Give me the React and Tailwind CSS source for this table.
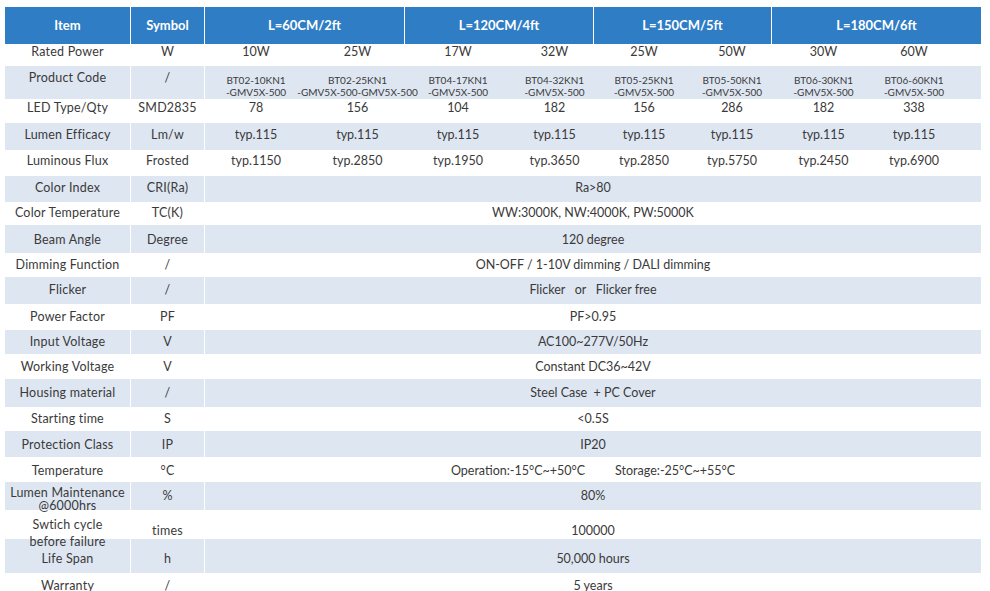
import React from "react";

const font = { fontFamily: "Lato, 'Open Sans', 'Liberation Sans', sans-serif" };

// sub column widths for the 8 value rows (204 -> 957)
const subW = ["w-[102px]", "w-[101px]", "w-[100px]", "w-[93px]", "w-[86px]", "w-[90px]", "w-[93px]", "w-[88px]"];

const codes = [
  ["BT02-10KN1", "-GMV5X-500"],
  ["BT02-25KN1", "-GMV5X-500-GMV5X-500"],
  ["BT04-17KN1", "-GMV5X-500"],
  ["BT04-32KN1", "-GMV5X-500"],
  ["BT05-25KN1", "-GMV5X-500"],
  ["BT05-50KN1", "-GMV5X-500"],
  ["BT06-30KN1", "-GMV5X-500"],
  ["BT06-60KN1", "-GMV5X-500"],
];

const rows = [
  { label: "Rated Power", sym: "W", vals: ["10W", "25W", "17W", "32W", "25W", "50W", "30W", "60W"], h: "h-[22px]", pad: "pb-[6px]" },
  { label: "Product Code", sym: "/", codes: true, h: "h-[33px]" },
  { label: "LED Type/Qty", sym: "SMD2835", vals: ["78", "156", "104", "182", "156", "286", "182", "338"], h: "h-[24px]", pad: "pb-[6px]" },
  { label: "Lumen Efficacy", sym: "Lm/w", vals: Array(8).fill("typ.115"), h: "h-[27px]", pad: "pb-[3px]" },
  { label: "Luminous Flux", sym: "Frosted", vals: ["typ.1150", "typ.2850", "typ.1950", "typ.3650", "typ.2850", "typ.5750", "typ.2450", "typ.6900"], h: "h-[26px]", pad: "pb-[4px]" },
  { label: "Color Index", sym: "CRI(Ra)", span: "Ra>80", h: "h-[26px]", pad: "pb-[2px]" },
  { label: "Color Temperature", sym: "TC(K)", span: "WW:3000K, NW:4000K, PW:5000K", h: "h-[23px]" },
  { label: "Beam Angle", sym: "Degree", span: "120 degree", h: "h-[28px]", pad: "pt-[2px]" },
  { label: "Dimming Function", sym: "/", span: "ON-OFF / 1-10V dimming / DALI dimming", h: "h-[24px]" },
  { label: "Flicker", sym: "/", span: "Flicker   or   Flicker free", h: "h-[27px]" },
  { label: "Power Factor", sym: "PF", span: "PF>0.95", h: "h-[26px]" },
  { label: "Input Voltage", sym: "V", span: "AC100~277V/50Hz", h: "h-[24px]" },
  { label: "Working Voltage", sym: "V", span: "Constant DC36~42V", h: "h-[25px]", pad: "pt-[2px]" },
  { label: "Housing material", sym: "/", span: "Steel Case  + PC Cover", h: "h-[28px]" },
  { label: "Starting time", sym: "S", span: "<0.5S", h: "h-[24px]" },
  { label: "Protection Class", sym: "IP", span: "IP20", h: "h-[26px]", pad: "pt-[2px]" },
  { label: "Temperature", sym: "°C", temp: true, h: "h-[25px]", pad: "pt-[4px]" },
  { label: ["Lumen Maintenance", "@6000hrs"], sym: "%", span: "80%", h: "h-[28px]", lead: "leading-[13px] pt-[4px]" },
  { label: ["Swtich cycle", "before failure"], sym: "times", span: "100000", h: "h-[29px]", pad: "pt-[13px]", lead: "leading-[17px] pt-[6px]" },
  { label: "Life Span", sym: "h", span: "50,000 hours", h: "h-[34px]", pad: "pt-[6px]" },
  { label: "Warranty", sym: "/", span: "5 years", h: "h-[26px]" },
];

const Header = () => (
  <div className="flex h-[37px] w-[976px] bg-[#2f7dc4] text-white font-bold text-[13px]">
    <div className="w-[125px] flex items-center justify-center">Item</div>
    <div className="w-[74px] flex items-center justify-center border-l border-white">Symbol</div>
    <div className="w-[200px] flex items-center justify-center border-l border-white">L=60CM/2ft</div>
    <div className="w-[189px] flex items-center justify-center border-l border-white">L=120CM/4ft</div>
    <div className="w-[178px] flex items-center justify-center border-l border-white">L=150CM/5ft</div>
    <div className="w-[210px] flex items-center justify-center border-l border-white">L=180CM/6ft</div>
  </div>
);

const Row = ({ row, blue }) => {
  const bg = blue ? "bg-[#dee6f2]" : "bg-white";
  const multi = Array.isArray(row.label);
  const labelCls = row.codes
    ? "items-start pt-[3px]"
    : multi
    ? "items-start " + row.lead
    : "items-center " + (row.pad || "");
  const cellCls = row.codes ? "items-start pt-[3px]" : "items-center " + (row.pad || "");

  return (
    <div className={`flex w-[976px] ${row.h} ${bg} text-[12.5px] text-[#3a3a3a]`}>
      <div className={`w-[125px] flex justify-center text-center tracking-[0.2px] ${labelCls}`}>
        {multi ? (
          <div className="flex flex-col items-center">
            <span className="whitespace-nowrap">{row.label[0]}</span>
            <span className="whitespace-nowrap">{row.label[1]}</span>
          </div>
        ) : (
          <span className="whitespace-nowrap">{row.label}</span>
        )}
      </div>
      <div className={`w-[74px] flex justify-center border-l border-white tracking-[0.2px] ${cellCls}`}>
        {row.sym}
      </div>
      <div className={`w-[777px] flex border-l border-white ${row.codes ? "items-stretch" : "items-center " + (row.pad || "")}`}>
        {row.vals &&
          row.vals.map((v, i) => (
            <div key={i} className={`${subW[i]} flex justify-center`}>
              {v}
            </div>
          ))}
        {row.codes &&
          codes.map((c, i) => (
            <div key={i} className={`${subW[i]} flex flex-col items-center justify-center pt-[7px] text-[10px] leading-[12px]`}>
              <span className="whitespace-nowrap">{c[0]}</span>
              <span className="whitespace-nowrap">{c[1]}</span>
            </div>
          ))}
        {row.span && (
          <div className="flex-1 flex justify-center whitespace-pre">{row.span}</div>
        )}
        {row.temp && (
          <div className="flex-1 flex justify-center gap-[30px]">
            <span>Operation:-15°C~+50°C</span>
            <span>Storage:-25°C~+55°C</span>
          </div>
        )}
      </div>
    </div>
  );
};

export default function App() {
  return (
    <div className="w-[990px] h-[591px] overflow-hidden bg-white pt-[7px] pl-[5px]" style={font}>
      <Header />
      {rows.map((r, i) => (
        <Row key={i} row={r} blue={i % 2 === 1} />
      ))}
    </div>
  );
}
